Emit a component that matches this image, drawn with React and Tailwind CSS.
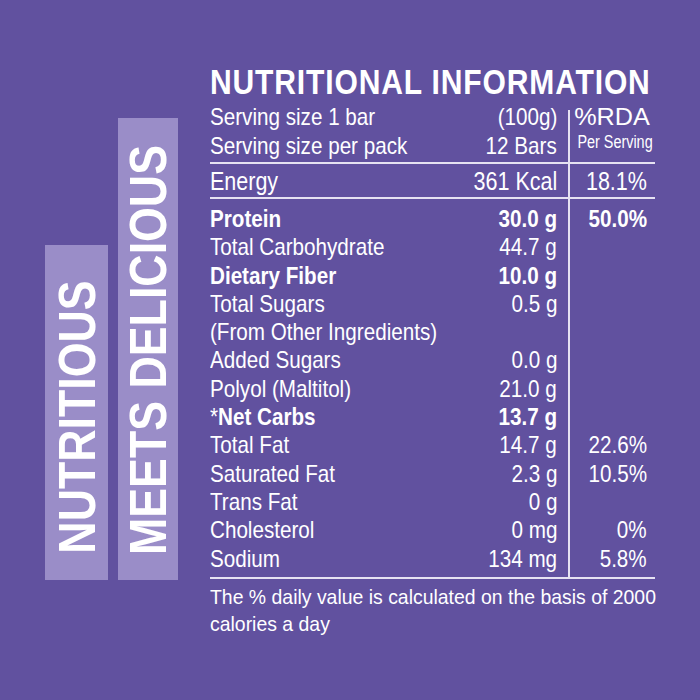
const rows = [
  { name: 'Protein', value: '30.0 g', rda: '50.0%', bold: true },
  { name: 'Total Carbohydrate', value: '44.7 g' },
  { name: 'Dietary Fiber', value: '10.0 g', bold: true },
  { name: 'Total Sugars', value: '0.5 g' },
  { name: '(From Other Ingredients)', value: '' },
  { name: 'Added Sugars', value: '0.0 g' },
  { name: 'Polyol (Maltitol)', value: '21.0 g' },
  { name: 'Net Carbs', value: '13.7 g', bold: true, star: true },
  { name: 'Total Fat', value: '14.7 g', rda: '22.6%' },
  { name: 'Saturated Fat', value: '2.3 g', rda: '10.5%' },
  { name: 'Trans Fat', value: '0 g' },
  { name: 'Cholesterol', value: '0 mg', rda: '0%' },
  { name: 'Sodium', value: '134 mg', rda: '5.8%' },
];

const Rule = () => <div className="h-[2px] bg-[#e6e2f2]" />;

const Divider = ({ className = '' }) => (
  <div className={`w-[1.5px] shrink-0 bg-[#e6e2f2] ${className}`} />
);

// one line of the left column: label on the left, amount flush right
const Line = ({ children, value, bold, className = 'h-[28.3px] leading-[28.3px] text-[24px]' }) => (
  <div className={`flex items-center justify-between ${className}`}>
    <span className={`inline-block origin-left scale-x-[0.86] whitespace-nowrap ${bold ? 'font-bold' : ''}`}>
      {children}
    </span>
    <span className={`inline-block origin-right scale-x-[0.86] whitespace-nowrap ${bold ? 'font-bold' : ''}`}>
      {value}
    </span>
  </div>
);

const Bar = ({ label, className, textBox }) => (
  <div className={`flex flex-col justify-end bg-[#9a8dc8] pb-[27px] ${className}`}>
    <div className={`flex items-center justify-center ${textBox}`}>
      <span className="inline-block -rotate-90 scale-x-[0.86] whitespace-nowrap text-[52px] font-bold leading-none text-white">
        {label}
      </span>
    </div>
  </div>
);

export default function App() {
  return (
    <div className="flex h-[700px] w-[700px] overflow-hidden bg-[#61519f] font-['Liberation_Sans',Arial,sans-serif] text-white">
      {/* Side bars */}
      <div className="flex h-[580px] items-end gap-[10px] pl-[45px]">
        <Bar label="NUTRITIOUS" className="h-[335px] w-[63px]" textBox="h-[273px]" />
        <Bar label="MEETS DELICIOUS" className="h-[462px] w-[60px]" textBox="h-[406px]" />
      </div>

      {/* Table */}
      <div className="ml-[32px] flex w-[445px] shrink-0 flex-col pt-[64px]">
        <div className="h-[35px] text-[35px] leading-[35px] font-bold">
          <span className="inline-block origin-left scale-x-[0.858] whitespace-nowrap tracking-[1px]">
            NUTRITIONAL INFORMATION
          </span>
        </div>

        {/* Serving */}
        <div className="flex">
          <div className="w-[358px] shrink-0 pr-[11px] pt-[3px] pb-[2px]">
            <Line value="(100g)" className="h-[29px] leading-[29px] text-[24px]">Serving size 1 bar</Line>
            <Line value="12 Bars" className="h-[29px] leading-[29px] text-[24px]">Serving size per pack</Line>
          </div>
          <Divider className="mt-[11px]" />
          <div className="flex min-w-0 flex-1 flex-col items-center pt-[3px]">
            <span className="inline-block h-[29px] scale-x-[1.05] text-[24px] leading-[29px] whitespace-nowrap">%RDA</span>
            <span className="inline-block ml-[6px] scale-x-[0.8] text-[18px] leading-[22px] whitespace-nowrap">Per Serving</span>
          </div>
        </div>
        <Rule />

        {/* Energy */}
        <div className="flex">
          <div className="w-[358px] shrink-0 pr-[11px] pt-[3px] pb-[1px]">
            <Line value="361 Kcal" className="h-[29px] leading-[29px] text-[25px]">Energy</Line>
          </div>
          <Divider />
          <div className="flex min-w-0 flex-1 items-center justify-end pt-[3px] pb-[1px] pr-[8px]">
            <span className="inline-block origin-right scale-x-[0.86] text-[25px] leading-[29px] whitespace-nowrap">18.1%</span>
          </div>
        </div>
        <Rule />

        {/* Nutrients */}
        <div className="flex">
          <div className="w-[358px] shrink-0 pr-[11px] pt-[6px] pb-[4px]">
            {rows.map((r) => (
              <Line key={r.name} value={r.value} bold={r.bold}>
                {r.star ? (
                  <>
                    <span className="font-normal">*</span>
                    {r.name}
                  </>
                ) : (
                  r.name
                )}
              </Line>
            ))}
          </div>
          <Divider />
          <div className="flex min-w-0 flex-1 flex-col pt-[6px] pb-[4px] pr-[8px]">
            {rows.map((r) => (
              <div key={r.name} className="flex h-[28.3px] items-center justify-end text-[24px] leading-[28.3px]">
                <span className={`inline-block origin-right scale-x-[0.86] whitespace-nowrap ${r.bold ? 'font-bold' : ''}`}>
                  {r.rda}
                </span>
              </div>
            ))}
          </div>
        </div>
        <Rule />

        {/* Footnote */}
        <div className="pt-[5.5px] text-[21px] leading-[26.5px]">
          <span className="block origin-left scale-x-[0.925] whitespace-nowrap">
            The % daily value is calculated on the basis of 2000
          </span>
          <span className="block origin-left scale-x-[0.925] whitespace-nowrap">calories a day</span>
        </div>
      </div>
    </div>
  );
}
